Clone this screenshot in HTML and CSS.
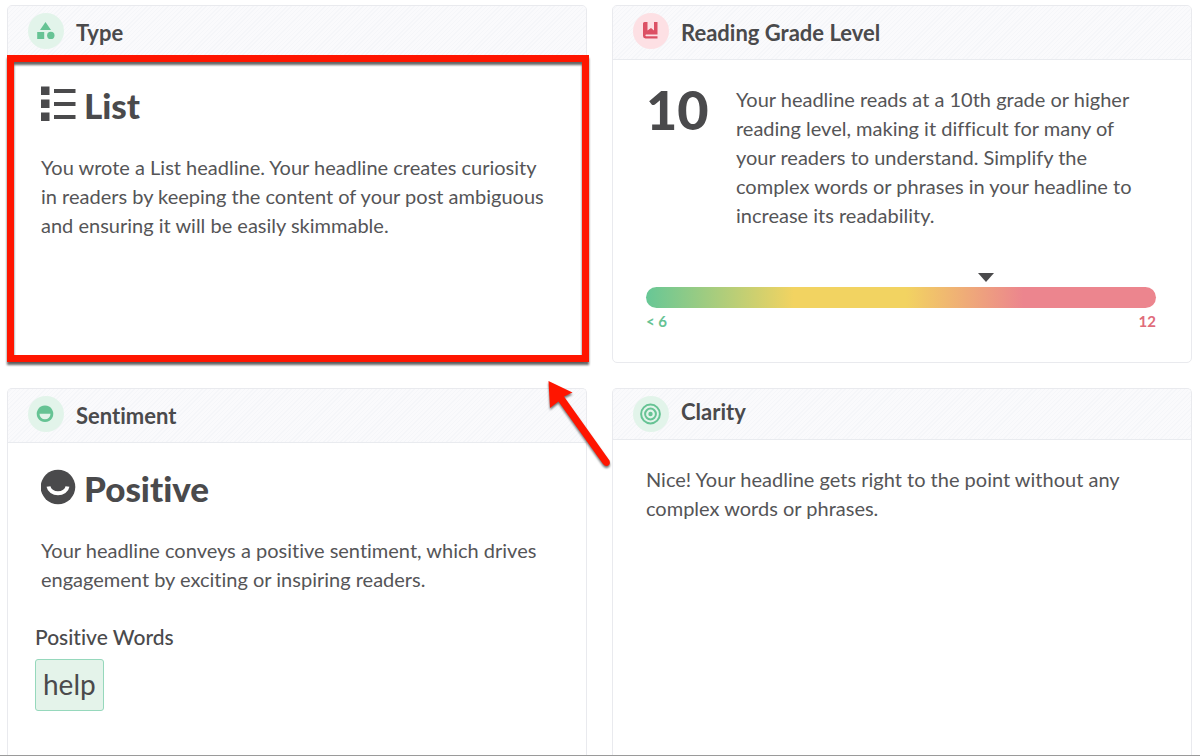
FILE: index.html
```html
<!DOCTYPE html>
<html lang="en">
<head>
<meta charset="utf-8">
<meta name="viewport" content="width=device-width, initial-scale=1">
<title>Headline analysis</title>
<link rel="stylesheet" href="styles.css">
</head>
<body>
<main class="board">
  <section class="card card-selected">
    <header class="card-header">
      <span class="badge badge-green">
        <svg viewBox="0 0 36 36" width="36" height="36" aria-hidden="true"><path d="M17.500 9l5.500 8h-11zM9.200 19h7v7h-7z"/><circle cx="22.800" cy="22.400" r="3.700"/></svg>
      </span>
      <h2 class="card-title">Type</h2>
    </header>
    <div class="card-body">
      <h3 class="result">
        <svg class="result-icon" viewBox="0 0 36 36" width="36" height="36" aria-hidden="true"><path d="M0 0.500h8.500v8.500H0zM0 13.500h8.500v8.500H0zM0 26.500h8.500v8.500H0zM13 3h21.500v4H13zM13 16h21.500v4H13zM13 29h21.500v4H13z"/></svg>
        List
      </h3>
      <p class="copy">You wrote a List headline. Your headline creates curiosity in readers by keeping the content of your post ambiguous and ensuring it will be easily skimmable.</p>
    </div>
    <div class="frame"></div>
    <svg class="arrow" viewBox="0 0 80 100" width="80" height="100" aria-hidden="true"><path d="M8.500 7L32.500 18.500L24 22.500L69.500 86.500Q71 91 67 92Q65 92.500 63 90L18.500 27.500L10 34Z"/></svg>
  </section>

  <section class="card">
    <header class="card-header">
      <span class="badge badge-red">
        <svg viewBox="0 0 36 36" width="36" height="36" aria-hidden="true"><path d="M11.500 9H14.500V17.500L18 15L21 17.500V9H24.500V21.500H13Q11.500 22.300 13 23.200H24.500V25.500H12.500Q10 25.300 10 23V10.500Q10 9 11.500 9Z"/></svg>
      </span>
      <h2 class="card-title">Reading Grade Level</h2>
    </header>
    <div class="card-body">
      <div class="grade">
        <strong class="grade-value">10</strong>
        <p class="copy">Your headline reads at a 10th grade or higher reading level, making it difficult for many of your readers to understand. Simplify the complex words or phrases in your headline to increase its readability.</p>
      </div>
      <div class="meter">
        <svg class="meter-marker" viewBox="0 0 16 9" width="16" height="9" aria-hidden="true"><path d="M0 0h16L8 9z"/></svg>
        <div class="meter-bar"></div>
        <div class="meter-labels"><span class="low">&lt; 6</span><span class="high">12</span></div>
      </div>
    </div>
  </section>

  <section class="card">
    <header class="card-header">
      <span class="badge badge-green">
        <svg viewBox="0 0 36 36" width="36" height="36" aria-hidden="true"><path fill-rule="evenodd" d="M17 9.500a8.300 8.300 0 1 0 .01 0zM11.500 17.800h11a5.500 5.500 0 0 1-11 0z"/></svg>
      </span>
      <h2 class="card-title">Sentiment</h2>
    </header>
    <div class="card-body">
      <h3 class="result">
        <svg class="result-icon" viewBox="0 0 36 36" width="36" height="36" aria-hidden="true"><circle cx="17" cy="18" r="17.300"/><path class="smile" d="M7.500 17.500A9.600 8 0 0 0 26.500 17.500"/></svg>
        Positive
      </h3>
      <p class="copy">Your headline conveys a positive sentiment, which drives engagement by exciting or inspiring readers.</p>
      <div class="words">
        <h4 class="words-title">Positive Words</h4>
        <span class="word">help</span>
      </div>
    </div>
  </section>

  <section class="card">
    <header class="card-header card-header-compact">
      <span class="badge badge-green">
        <svg class="target" viewBox="0 0 36 36" width="36" height="36" aria-hidden="true"><circle cx="17.500" cy="18" r="9.400"/><circle cx="17.500" cy="18" r="5.400"/><circle class="bull" cx="17.500" cy="18" r="2.200"/></svg>
      </span>
      <h2 class="card-title">Clarity</h2>
    </header>
    <div class="card-body">
      <p class="copy">Nice! Your headline gets right to the point without any complex words or phrases.</p>
    </div>
  </section>
</main>
</body>
</html>
```
FILE: styles.css
```css
* {
  box-sizing: border-box;
}

body {
  margin: 0;
  background: #fff;
  color: #4a4a4c;
  font-family: Lato, "Open Sans", sans-serif;
  font-variant-ligatures: none;
}

h2, h3, h4, p {
  margin: 0;
}

.board {
  display: grid;
  grid-template-columns: 1fr 1fr;
  grid-template-rows: auto 1fr;
  gap: 25px;
  height: 100vh;
  padding: 5px 8px 0 7px;
  overflow: hidden;
  border-bottom: 1px solid #9a9a9a;
}

.card {
  border: 1px solid #e9eaee;
  border-radius: 5px;
}

.board > .card:nth-child(n + 3) {
  border-bottom: 0;
  border-radius: 5px 5px 0 0;
}

.card-selected {
  position: relative;
}

.card-header {
  display: flex;
  align-items: center;
  gap: 12px;
  height: 54px;
  padding: 0 20px 3px;
  border-bottom: 1px solid #e9ebef;
  border-radius: 4px 4px 0 0;
  background: repeating-linear-gradient(135deg, #fafafc 0 2px, #f5f6f9 2px 3px);
}

.card-header-compact {
  height: 51px;
  padding-bottom: 0;
}

.card-title {
  padding-top: 3px;
  font-size: 22px;
  line-height: 28px;
  font-weight: 700;
}

.card-header-compact .card-title {
  padding-bottom: 4px;
  padding-top: 0;
}

.badge {
  display: flex;
  width: 36px;
  height: 36px;
  border-radius: 50%;
}

.badge-green {
  background: #e2f4ea;
  fill: #66c394;
}

.badge-red {
  background: #fde0e4;
  fill: #dc5064;
}

.target {
  fill: none;
  stroke: #66c394;
  stroke-width: 2;
}

.bull {
  fill: #66c394;
  stroke: none;
}

.card-body {
  padding: 25px 33px 0;
}

.result {
  display: flex;
  align-items: center;
  gap: 7px;
  margin-bottom: 28px;
  font-size: 35px;
  line-height: 40px;
  font-weight: 900;
}

.result-icon {
  flex: none;
  margin-bottom: 3px;
  fill: #4a4a4c;
}

.smile {
  fill: none;
  stroke: #fff;
  stroke-width: 4;
}

.copy {
  color: #555557;
  font-size: 20px;
  line-height: 29px;
}

.frame {
  position: absolute;
  inset: 49px -3px 0 -1px;
  border: 7px solid #ff1500;
  filter: drop-shadow(0 3px 1px rgba(0, 0, 0, 0.6));
}

.arrow {
  position: absolute;
  right: -34px;
  bottom: -112px;
  fill: #ff1500;
  filter: drop-shadow(0 2px 1px rgba(0, 0, 0, 0.55));
}

.grade {
  display: flex;
  gap: 30px;
  padding-right: 16px;
}

.grade-value {
  flex: none;
  width: 60px;
  font-size: 54px;
  line-height: 50px;
  font-weight: 900;
}

.meter {
  padding: 43px 2px 31px 0;
}

.meter-marker {
  display: block;
  margin: 0 0 5px 65%;
  fill: #4a4a4c;
}

.meter-bar {
  height: 21px;
  border-radius: 11px;
  background: linear-gradient(90deg, #67c796 0%, #f2d361 29%, #f2d361 51%, #ec858e 74%, #ec858e 100%);
}

.meter-labels {
  display: flex;
  justify-content: space-between;
  margin-top: 3px;
  font-size: 15px;
  line-height: 20px;
  font-weight: 700;
}

.low {
  color: #66c394;
}

.high {
  color: #e06c7a;
}

.words {
  display: flex;
  flex-direction: column;
  align-items: flex-start;
  gap: 8px;
  margin: 29px 0 0 -6px;
}

.words-title {
  font-size: 21px;
  line-height: 28px;
  font-weight: 500;
}

.word {
  padding: 7px 7px 9px;
  border: 1px solid #96d8bc;
  border-radius: 3px;
  background: #e4f3ea;
  font-size: 28px;
  line-height: 34px;
}
```
